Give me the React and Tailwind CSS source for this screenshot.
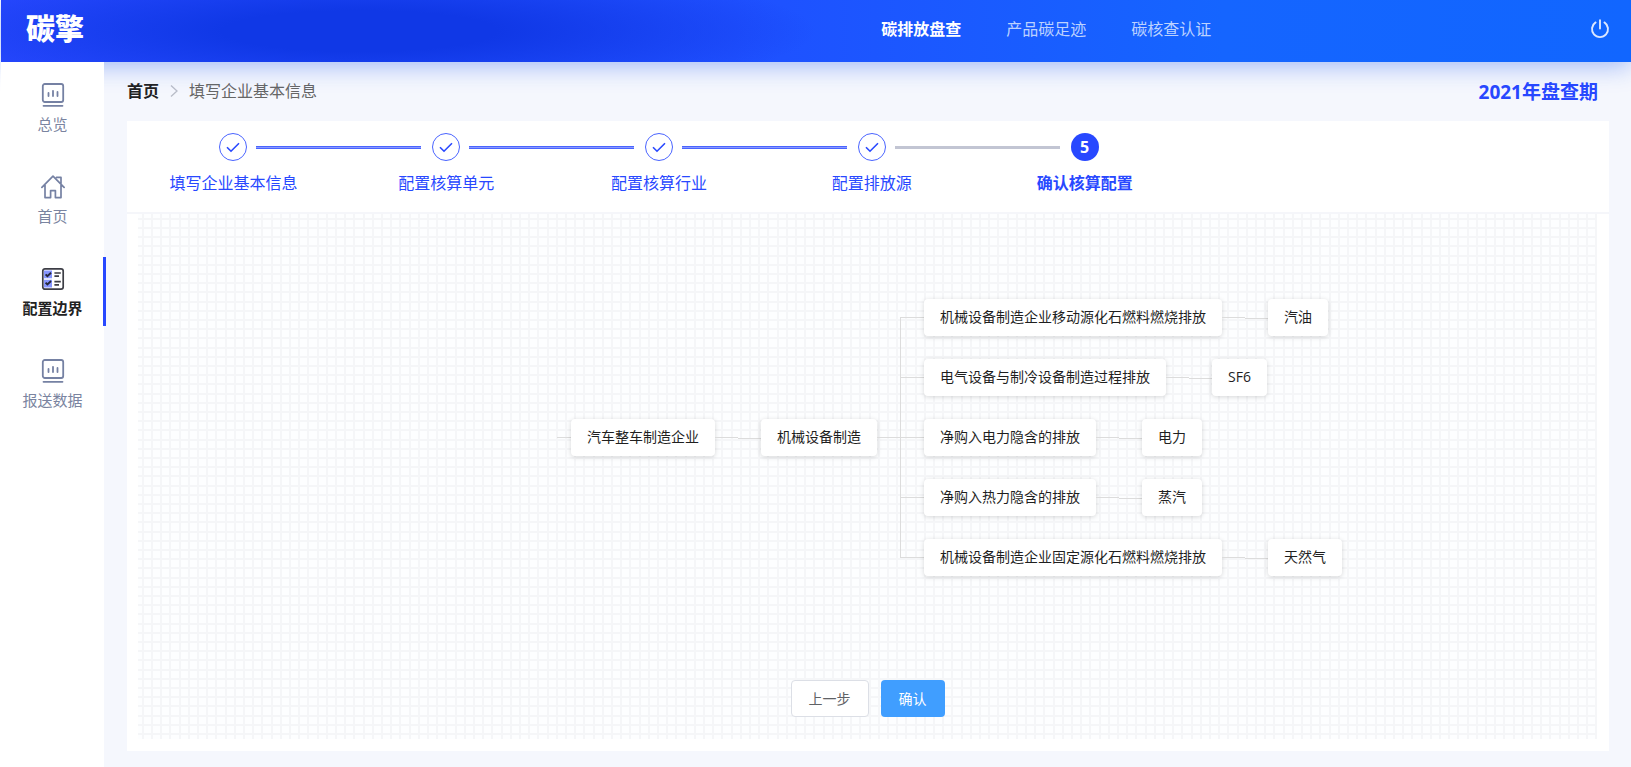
const navItems = ['碳排放盘查', '产品碳足迹', '碳核查认证'];

const menuItems = [
    { label: '总览', icon: ChartIcon },
    { label: '首页', icon: HomeIcon },
    { label: '配置边界', icon: ChecklistIcon, active: true },
    { label: '报送数据', icon: ChartIcon }
];

const steps = ['填写企业基本信息', '配置核算单元', '配置核算行业', '配置排放源', '确认核算配置'];
const currentStep = 4;

const sources = [
    { name: '机械设备制造企业移动源化石燃料燃烧排放', energy: '汽油' },
    { name: '电气设备与制冷设备制造过程排放', energy: 'SF6' },
    { name: '净购入电力隐含的排放', energy: '电力' },
    { name: '净购入热力隐含的排放', energy: '蒸汽' },
    { name: '机械设备制造企业固定源化石燃料燃烧排放', energy: '天然气' }
];

function ChartIcon() {
    return (
        <svg className="w-6 h-6" viewBox="0 0 24 24" fill="none" stroke="#7581a3" strokeWidth="1.8" strokeLinecap="round">
            <rect x="1.8" y="1" width="20.4" height="18" rx="2" />
            <path d="M7.5 10v3M12 7.8V13M16.5 9v4M2.5 22.8h19" />
        </svg>
    );
}

function HomeIcon() {
    return (
        <svg className="w-6 h-6" viewBox="0 0 24 24" fill="none" stroke="#7581a3" strokeWidth="1.7" strokeLinecap="round" strokeLinejoin="round">
            <path d="M0.9 12.4 12 1.2l11.1 11.2M4 10v12.6h5.6v-7h4.8v7H20V10M15.5 2.4H20v6" />
        </svg>
    );
}

function ChecklistIcon() {
    return (
        <svg className="w-6 h-6" viewBox="0 0 24 24" fill="none">
            <path d="M3 3.6h8v7.6H3zM3 12.8h8v7.6H3z" fill="#8796ff" />
            <rect x="1.8" y="1.8" width="20.4" height="20.4" rx="2.2" stroke="#3c3d45" strokeWidth="1.7" />
            <path d="M4.6 7.4l1.8 1.8L10 5.8M4.6 15.6l1.8 1.8L10 14" stroke="#24263a" strokeWidth="1.9" />
            <path d="M13.4 6h6.4M13.4 9.2h4.6M13.4 14.6h6.4M13.4 17.8h4.6" stroke="#3c3d45" strokeWidth="1.7" />
        </svg>
    );
}

function PowerIcon() {
    return (
        <svg className="w-5 h-5" viewBox="0 0 20 20" fill="none" stroke="currentColor" strokeWidth="1.9" strokeLinecap="round">
            <path d="M10 1.2v8.4M5.6 3.4a8 8 0 1 0 8.8 0" />
        </svg>
    );
}

function GridBackground() {
    return (
        <svg className="absolute inset-0 w-full h-full" aria-hidden="true">
            <defs>
                <pattern id="grid" width="46" height="46" patternUnits="userSpaceOnUse">
                    <rect width="46" height="46" fill="#fdfeff" />
                    <path d="M5 0v46M14 0v46M23 0v46M32 0v46M42 0v46M0 5h46M0 14h46M0 23h46M0 32h46M0 42h46" stroke="#f5f6f8" strokeWidth="2" />
                </pattern>
            </defs>
            <rect width="100%" height="100%" fill="url(#grid)" />
        </svg>
    );
}

function Node({ children }) {
    return (
        <div className="h-[37px] px-4 flex items-center bg-white rounded text-sm text-[#1f1f1f] whitespace-nowrap shadow-[0_1px_5px_rgba(0,0,0,0.16)]">
            {children}
        </div>
    );
}

// line between a node and its only child
function Link() {
    return (
        <div className="flex h-[3px]">
            <div className="w-[23px] h-0.5 border-b border-[#dcdcdc]" />
            <div className="w-[23px] h-[3px] border-b border-[#dcdcdc]" />
        </div>
    );
}

function Branch({ first, last }) {
    return (
        <div className="w-6 h-[60px]">
            <div className={`h-[30px] border-[#dcdcdc] ${first ? '' : 'border-l'}`} />
            <div className={`h-[30px] border-t border-[#dcdcdc] ${last ? '' : 'border-l'}`} />
        </div>
    );
}

function Header() {
    return (
        <header className="relative z-10 h-[62px] flex items-center pb-1 pl-[25px] pr-[21px] text-white bg-[radial-gradient(ellipse_28%_110%_at_22%_50%,#1038e6_0%,#1038e6_30%,rgba(16,56,230,0)_100%),linear-gradient(90deg,#2848ff_0%,#1f50ff_45%,#1565ff_75%,#1166ff_100%)] shadow-[0_4px_24px_rgba(30,90,240,0.4)]">
            <h1 className="w-[57px] text-[29px] leading-8 font-black whitespace-nowrap">碳擎</h1>
            <nav className="ml-[50.4%] flex gap-[45px] text-base">
                {navItems.map((item, i) => (
                    <a key={item} href="#" className={`whitespace-nowrap ${i === 0 ? 'font-bold' : 'text-[#bcd2ff]'}`}>
                        {item}
                    </a>
                ))}
            </nav>
            <button type="button" aria-label="退出" className="ml-auto text-[#dbe7ff]">
                <PowerIcon />
            </button>
        </header>
    );
}

function Sidebar() {
    return (
        <aside className="relative z-20 w-[103px] shrink-0 bg-white pt-[11px]">
            <nav className="flex flex-col gap-[23px]">
                {menuItems.map(({ label, icon: Icon, active }) => (
                    <a
                        key={label}
                        href="#"
                        className={`relative h-[69px] pt-[10px] flex flex-col items-center gap-[7px] text-[15px] leading-5 ${active ? 'font-bold text-[#222]' : 'text-[#7a84a0]'}`}
                    >
                        <Icon />
                        {label}
                        {active && <span className="absolute -right-0.5 top-0 w-[3px] h-full bg-[#2848ff]" />}
                    </a>
                ))}
            </nav>
        </aside>
    );
}

function Steps() {
    return (
        <ol className="w-[71.8%] flex pt-3 pb-[17px]">
            {steps.map((step, i) => (
                <li key={step} className="relative flex-1 flex flex-col items-center text-base text-[#2848ff]">
                    {i < currentStep ? (
                        <span className="w-7 h-7 rounded-full border border-[#4a64ff] flex items-center justify-center">
                            <svg className="w-4 h-4" viewBox="0 0 16 16" fill="none" stroke="#2848ff" strokeWidth="1.6">
                                <path d="M2 8.2 6 12.2 14 4.2" />
                            </svg>
                        </span>
                    ) : (
                        <span className="w-7 h-7 rounded-full bg-[#2848ff] text-white font-bold flex items-center justify-center">
                            {i + 1}
                        </span>
                    )}
                    <span className={`mt-[10px] leading-6 whitespace-nowrap ${i === currentStep ? 'font-bold' : ''}`}>{step}</span>
                    {i < currentStep && (
                        <span
                            className={`absolute top-[13px] left-[calc(50%+23px)] w-[calc(100%-48px)] h-[3px] ${i === currentStep - 1 ? 'bg-[#c2c5d3]' : 'bg-[#8a9aff] border-y border-[#4a64ff]'}`}
                        />
                    )}
                </li>
            ))}
        </ol>
    );
}

function BoundaryTree() {
    return (
        <div className="relative mt-[73px] ml-[419px] flex items-center">
            <div className="w-[14px] border-t border-[#dcdcdc]" />
            <Node>汽车整车制造企业</Node>
            <Link />
            <Node>机械设备制造</Node>
            <div className="w-[23px] border-t border-[#dcdcdc]" />
            <ul>
                {sources.map((source, i) => (
                    <li key={source.name} className="flex items-center">
                        <Branch first={i === 0} last={i === sources.length - 1} />
                        <Node>{source.name}</Node>
                        <Link />
                        <Node>{source.energy}</Node>
                    </li>
                ))}
            </ul>
        </div>
    );
}

export default function App() {
    return (
        <div className="min-h-screen flex flex-col pl-px bg-white font-['Open_Sans','Noto_Sans_CJK_SC',sans-serif]">
            <Header />
            <div className="flex-1 flex">
                <Sidebar />
                <main className="flex-1 min-w-0 flex flex-col bg-[#f5f7fd] pl-[23px] pr-[22px] pb-4">
                    <div className="h-[59px] pb-0.5 flex items-center justify-between">
                        <div className="flex items-center text-base">
                            <a href="#" className="font-bold text-[#222]">首页</a>
                            <svg className="w-[30px] h-3" viewBox="0 0 30 12" fill="none" stroke="#b9bdc8" strokeWidth="1.3">
                                <path d="M12 0.5 18 6 12 11.5" />
                            </svg>
                            <span className="text-[#666]">填写企业基本信息</span>
                        </div>
                        <span className="pt-1 pr-[11px] text-[19px] font-bold text-[#2848ff]">2021年盘查期</span>
                    </div>
                    <section className="flex-1 flex flex-col bg-white">
                        <Steps />
                        <div className="flex-1 flex flex-col border-t-2 border-[#f5f6fa] pl-[11px] pr-3 pb-3">
                            <div className="relative flex-1 flex flex-col">
                                <GridBackground />
                                <BoundaryTree />
                                <div className="relative mt-auto mb-[22px] flex justify-center gap-3 text-sm">
                                    <button type="button" className="h-[37px] w-[78px] rounded border border-[#dcdfe6] bg-white text-[#606266]">上一步</button>
                                    <button type="button" className="h-[37px] w-16 rounded bg-[#409eff] text-white">确认</button>
                                </div>
                            </div>
                        </div>
                    </section>
                </main>
            </div>
        </div>
    );
}
